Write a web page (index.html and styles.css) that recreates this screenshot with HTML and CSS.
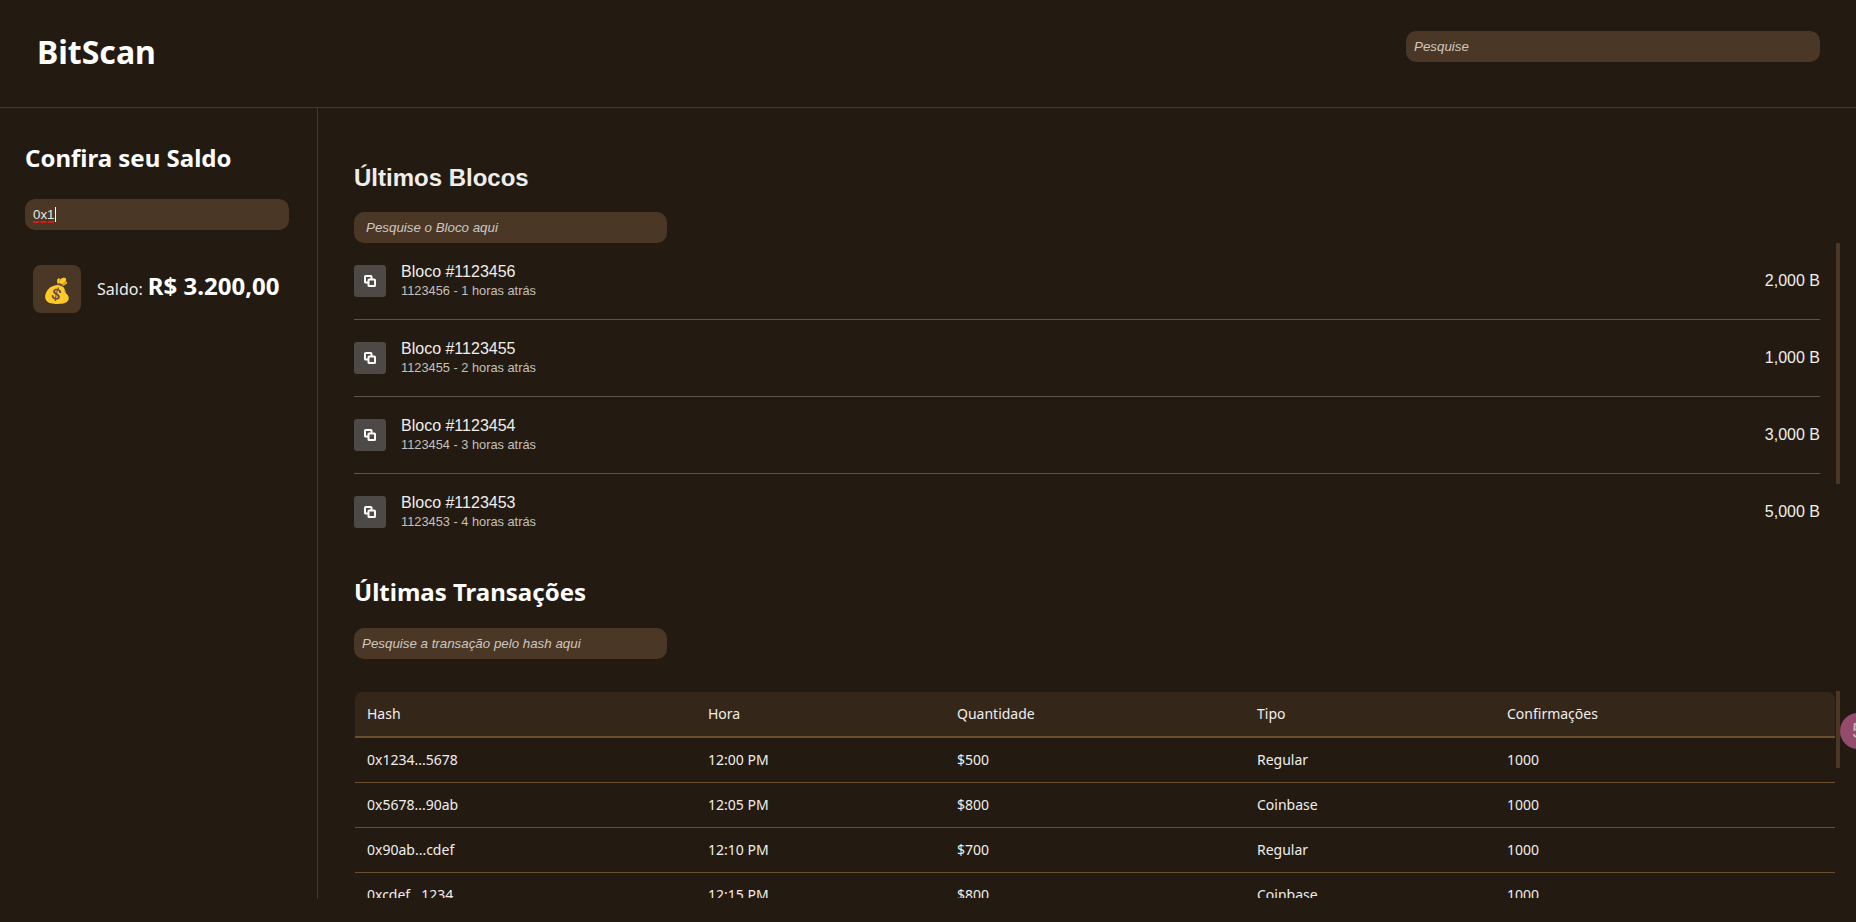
FILE: index.html
```html
<!DOCTYPE html>
<html lang="en">
<head>
    <meta charset="UTF-8">
    <meta name="viewport" content="width=device-width, initial-scale=1.0">
    <title>BitScan</title>
    <link rel="stylesheet" href="styles.css">
</head>
<body>
    <header class="topBar">
        <h1 class="logo">BitScan</h1>
        <div class="field topSearch"><em>Pesquise</em></div>
    </header>

    <div class="layout">
        <aside class="sidebar">
            <h2 class="sideTitle">Confira seu Saldo</h2>
            <div class="field sideInput"><span class="typed">0x1</span><span class="caret"></span></div>
            <div class="balance">
                <div class="balanceIcon">💰</div>
                <p class="balanceText">Saldo: <strong>R$ 3.200,00</strong></p>
            </div>
        </aside>

        <main class="content">
            <section class="blocks">
                <h2 class="sectionTitle">Últimos Blocos</h2>
                <div class="field blockSearch"><em>Pesquise o Bloco aqui</em></div>
                <div class="blockList">
                    <div class="blockRow">
                        <div class="blockIcon"><svg viewBox="0 0 12 12"><rect x="1" y="1" width="6.5" height="6.5" rx="0.6"/><rect x="4.5" y="4.5" width="6.5" height="6.5" rx="0.6"/></svg></div>
                        <div class="blockInfo"><div class="blockName">Bloco #1123456</div><div class="blockMeta">1123456 - 1 horas atrás</div></div>
                        <div class="blockSize">2,000 B</div>
                    </div>
                    <div class="blockRow">
                        <div class="blockIcon"><svg viewBox="0 0 12 12"><rect x="1" y="1" width="6.5" height="6.5" rx="0.6"/><rect x="4.5" y="4.5" width="6.5" height="6.5" rx="0.6"/></svg></div>
                        <div class="blockInfo"><div class="blockName">Bloco #1123455</div><div class="blockMeta">1123455 - 2 horas atrás</div></div>
                        <div class="blockSize">1,000 B</div>
                    </div>
                    <div class="blockRow">
                        <div class="blockIcon"><svg viewBox="0 0 12 12"><rect x="1" y="1" width="6.5" height="6.5" rx="0.6"/><rect x="4.5" y="4.5" width="6.5" height="6.5" rx="0.6"/></svg></div>
                        <div class="blockInfo"><div class="blockName">Bloco #1123454</div><div class="blockMeta">1123454 - 3 horas atrás</div></div>
                        <div class="blockSize">3,000 B</div>
                    </div>
                    <div class="blockRow">
                        <div class="blockIcon"><svg viewBox="0 0 12 12"><rect x="1" y="1" width="6.5" height="6.5" rx="0.6"/><rect x="4.5" y="4.5" width="6.5" height="6.5" rx="0.6"/></svg></div>
                        <div class="blockInfo"><div class="blockName">Bloco #1123453</div><div class="blockMeta">1123453 - 4 horas atrás</div></div>
                        <div class="blockSize">5,000 B</div>
                    </div>
                </div>
                <div class="thumb blockThumb"></div>
            </section>

            <section class="transactions">
                <h2 class="sectionTitle">Últimas Transações</h2>
                <div class="field txSearch"><em>Pesquise a transação pelo hash aqui</em></div>
                <div class="txWrap">
                    <table class="txTable">
                        <thead>
                            <tr><th class="colHash">Hash</th><th class="colTime">Hora</th><th class="colQty">Quantidade</th><th class="colType">Tipo</th><th>Confirmações</th></tr>
                        </thead>
                        <tbody>
                            <tr><td>0x1234...5678</td><td>12:00 PM</td><td>$500</td><td>Regular</td><td>1000</td></tr>
                            <tr><td>0x5678...90ab</td><td>12:05 PM</td><td>$800</td><td>Coinbase</td><td>1000</td></tr>
                            <tr><td>0x90ab...cdef</td><td>12:10 PM</td><td>$700</td><td>Regular</td><td>1000</td></tr>
                            <tr><td>0xcdef...1234</td><td>12:15 PM</td><td>$800</td><td>Coinbase</td><td>1000</td></tr>
                        </tbody>
                    </table>
                </div>
                <div class="thumb txThumb"></div>
            </section>
        </main>
    </div>

    <div class="floatBadge">5</div>
</body>
</html>
```

FILE: styles.css
```css
* {
    box-sizing: border-box;
}
html, body {
    margin: 0;
    height: 100%;
    overflow: hidden;
}
body {
    background-color: #231b12;
    color: #fff;
    font-family: "Liberation Sans", Arial, sans-serif;
    position: relative;
}
h1, h2, p {
    margin: 0;
}

.topBar {
    height: 108px;
    border-bottom: 1px solid #4a3725;
    display: flex;
    justify-content: space-between;
    padding: 31px 36px 0 37px;
}
.logo {
    font-family: "Noto Sans", sans-serif;
    font-size: 32px;
    font-weight: 700;
    line-height: 44px;
    margin-top: -1px;
}

.field {
    height: 31px;
    background-color: #4a3725;
    border-radius: 10px;
    font-size: 13.333px;
    color: #cdc8c2;
    display: flex;
    align-items: center;
    padding-left: 8px;
}
.topSearch {
    width: 414px;
}

.layout {
    display: flex;
    height: 791px;
}
.sidebar {
    width: 318px;
    border-right: 1px solid #4a3725;
    padding: 33px 28px 0 25px;
}
.sideTitle {
    font-family: "Noto Sans", sans-serif;
    font-size: 24px;
    font-weight: 700;
    line-height: 33px;
}
.sideInput {
    margin-top: 25px;
    color: #e8e6e3;
}
.typed {
    text-decoration: underline dashed #d01c1c 1.5px;
    text-underline-offset: 2px;
}
.caret {
    width: 1px;
    height: 15px;
    background-color: #fff;
}
.balance {
    display: flex;
    align-items: center;
    gap: 16px;
    margin: 35px 0 0 8px;
}
.balanceIcon {
    width: 48px;
    height: 48px;
    padding-top: 4px;
    background-color: #4a3725;
    border-radius: 8px;
    display: flex;
    align-items: center;
    justify-content: center;
    font-size: 24px;
    font-family: "Noto Color Emoji", "Noto Sans", sans-serif;
}
.balanceText {
    font-family: "Noto Sans", sans-serif;
    font-size: 16px;
    color: #f0eeeb;
    margin-bottom: 7px;
}
.balanceText strong {
    font-size: 24px;
    font-weight: 700;
    color: #fff;
    margin-left: 1px;
}

.content {
    flex: 1;
    padding: 0 36px;
    overflow: hidden;
}
.blocks, .transactions {
    position: relative;
}
.sectionTitle {
    font-size: 24px;
    font-weight: 700;
    line-height: 33px;
}
.blocks .sectionTitle {
    padding-top: 53px;
    height: 86px;
    margin-bottom: 18px;
    color: #f0eeeb;
}
.blockSearch {
    width: 313px;
    padding-left: 12px;
}
.blockRow {
    display: flex;
    align-items: center;
    height: 77px;
    border-bottom: 1px solid #5a5550;
}
.blockRow:last-child {
    border-bottom-color: transparent;
}
.blockIcon {
    width: 32px;
    height: 32px;
    background-color: #4c4947;
    border-radius: 3px;
    display: flex;
    align-items: center;
    justify-content: center;
    margin-right: 15px;
}
.blockIcon svg {
    width: 12px;
    height: 12px;
    fill: #4c4947;
    stroke: #fff;
    stroke-width: 2;
}
.blockInfo {
    flex: 1;
    margin-bottom: 2px;
}
.blockName {
    font-size: 16px;
    line-height: 20px;
    color: #f0eeeb;
}
.blockMeta {
    font-size: 12.8px;
    line-height: 16px;
    margin-top: 1px;
    color: #c4c0bb;
}
.blockSize {
    font-size: 16px;
    color: #f0eeeb;
}

.thumb {
    position: absolute;
    width: 4px;
    background-color: #4a3725;
}
.blockThumb {
    right: -20px;
    top: 135px;
    height: 241px;
}

.transactions .sectionTitle {
    font-family: "Noto Sans", sans-serif;
    margin-top: 24px;
}
.txSearch {
    margin-top: 20px;
    width: 313px;
}
.txWrap {
    margin: 33px -15px 0 1px;
    height: 206px;
    overflow: hidden;
}
.txTable {
    width: 100%;
    border-collapse: separate;
    border-spacing: 0;
    font-family: "Noto Sans", sans-serif;
    font-size: 14px;
}
.txTable th {
    height: 46px;
    background-color: #35261a;
    font-weight: 400;
    text-align: left;
    padding: 0 12px 2px;
    color: #f0eeeb;
    border-bottom: 2px solid #6b4e30;
}
.txTable th:first-child {
    border-top-left-radius: 8px;
}
.txTable th:last-child {
    border-top-right-radius: 8px;
}
.txTable td {
    height: 45px;
    padding: 0 12px 2px;
    color: #f0eeeb;
    border-bottom: 1px solid #6b4e30;
}
.colHash { width: 341px; }
.colTime { width: 249px; }
.colQty { width: 300px; }
.colType { width: 250px; }
.txThumb {
    right: -20px;
    top: 116px;
    height: 77px;
}

.floatBadge {
    position: absolute;
    left: 1840px;
    top: 713px;
    width: 36px;
    height: 36px;
    border-radius: 50%;
    background-color: #944b6c;
    color: #c9b5be;
    font-size: 22px;
    display: flex;
    align-items: center;
    justify-content: center;
}
```
